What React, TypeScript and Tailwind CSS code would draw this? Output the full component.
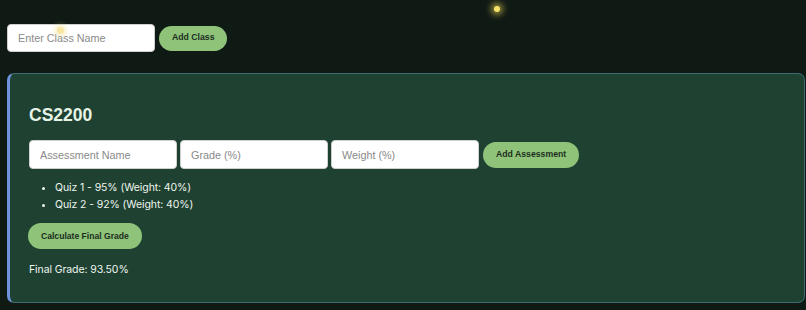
import React from "react";

export default function App() {
  const items = ["Quiz 1 - 95% (Weight: 40%)", "Quiz 2 - 92% (Weight: 40%)"];
  return (
    <div className="relative w-[806px] h-[310px] overflow-hidden bg-[#101a15] font-['Liberation_Sans',Arial,sans-serif]">
      <span className="absolute left-[494px] top-[6px] w-[6px] h-[6px] rounded-full bg-[#f4e36a] shadow-[0_0_6px_3px_rgba(240,220,90,0.6)]" />
      <span className="absolute left-[57px] top-[27px] w-[7px] h-[7px] rounded-full bg-[#f6dc7a]/70 shadow-[0_0_5px_2px_rgba(246,220,120,0.5)]" />
      <div className="flex items-center gap-1 pl-[7px] pt-[24px]">
        <input
          placeholder="Enter Class Name"
          className="w-[148px] h-[28px] rounded-[4px] bg-white px-[10px] text-[10.8px] text-gray-800 placeholder:text-[#8a8a8a] border border-[#cfcfcf] outline-none"
        />
        <button className="h-[25px] px-[13px] rounded-full bg-[#8ec379] text-[8.7px] font-bold text-[#1c2e1e]">
          Add Class
        </button>
      </div>
      <div className="ml-[7px] mr-[1px] mt-[21px] h-[230px] rounded-[7px] border border-[#3f6a6e] border-l-[3px] border-l-[#6f93da] bg-[#1f4132] pl-[19px] pt-[30px]">
        <h2 className="text-[17.5px] font-bold text-[#e6f4e6] leading-[22px]">CS2200</h2>
        <div className="flex items-center gap-[3px] mt-[14px]">
          {["Assessment Name", "Grade (%)", "Weight (%)"].map((p) => (
            <input
              key={p}
              placeholder={p}
              className="w-[148px] h-[29px] rounded-[4px] bg-white px-[10px] text-[10.8px] text-gray-800 placeholder:text-[#8a8a8a] border border-[#cfcfcf] outline-none"
            />
          ))}
          <button className="ml-[1px] h-[26px] px-[13px] rounded-full bg-[#8ec379] text-[8.7px] font-bold text-[#1c2e1e]">
            Add Assessment
          </button>
        </div>
        <ul className="list-disc pl-[26px] mt-[10px] text-[10.5px] leading-[17px] tracking-[-0.1px] text-[#eef5ee] font-['Inter',sans-serif]">
          {items.map((t) => (
            <li key={t}>{t}</li>
          ))}
        </ul>
        <button className="-ml-[1px] mt-[10px] h-[26px] px-[13px] rounded-full bg-[#8ec379] text-[8.6px] font-bold text-[#1c2e1e]">
          Calculate Final Grade
        </button>
        <p className="mt-[12px] text-[10.5px] leading-[18px] tracking-[-0.1px] text-[#eef5ee] font-['Inter',sans-serif]">Final Grade: 93.50%</p>
      </div>
    </div>
  );
}
